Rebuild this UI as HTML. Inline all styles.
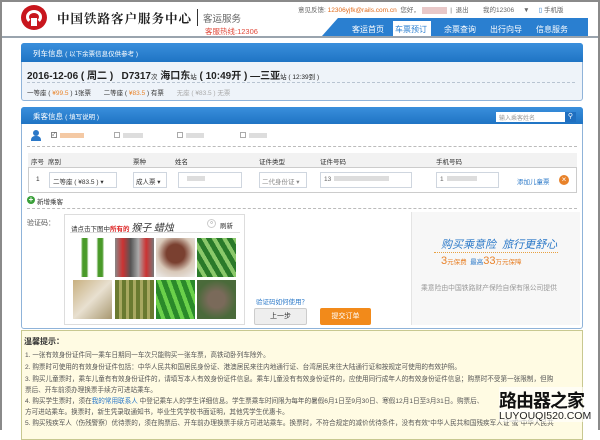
<!DOCTYPE html>
<html><head><meta charset="utf-8"><style>
*{margin:0;padding:0;box-sizing:border-box}
body{width:600px;height:430px;overflow:hidden;background:#fff;font-family:"Liberation Sans","Noto Sans CJK SC",sans-serif;font-size:8px;color:#333;position:relative}
.a{position:absolute;white-space:nowrap}
.frame{position:absolute;left:0;top:0;width:600px;height:430px;border:2px solid #8a8a8a;border-bottom:none;pointer-events:none}
.ph{background:linear-gradient(#3a8fdc,#1f74c4);color:#fff;height:19px;border-radius:3px 3px 0 0}
.in{position:absolute;border:1px solid #cfd6df;background:#fff;height:16px;top:172px;font-size:6.5px;color:#666;padding:3px 3px;white-space:nowrap;overflow:hidden}
.img{position:absolute;width:39px;height:39px}
.tip{position:absolute;left:25px;font-size:6.6px;color:#555;white-space:nowrap}
</style></head><body>
<div class="a" style="left:0;top:0;width:600px;height:38px;background:#fff;border-bottom:2px solid #9aa4ae"></div>
<div class="a" style="left:21px;top:5px;width:26px;height:25px;border-radius:50%;background:#c8161d"></div>
<div class="a" style="left:26px;top:10px;width:16px;height:14px;border-radius:50%;border:3px solid #fff;border-bottom-color:transparent"></div>
<div class="a" style="left:31px;top:18px;width:6px;height:8px;background:#fff"></div>
<div class="a" style="left:57px;top:9px;font-size:12.5px;font-weight:bold;letter-spacing:1px;color:#222;font-family:'Noto Serif CJK SC',serif">中国铁路客户服务中心</div>
<div class="a" style="left:197px;top:9px;width:1px;height:17px;background:#333"></div>
<div class="a" style="left:203px;top:11px;font-size:9.5px;color:#666">客运服务</div>
<div class="a" style="left:205px;top:26px;font-size:7.5px;color:#e0493a">客服热线:12306</div>
<div class="a" style="left:298px;top:4px;font-size:6.5px;color:#666">意见反馈: <span style="color:#e06a1a">12306yjfk@rails.com.cn</span> &nbsp;您好， <span style="display:inline-block;width:25px;height:7px;background:#e8c8c8;vertical-align:middle"></span> &nbsp;| &nbsp;退出 &nbsp; &nbsp; &nbsp; &nbsp;我的12306 &nbsp; &nbsp; ▼ &nbsp; &nbsp; <span style="color:#2a78c8">▯</span> 手机版</div>
<div class="a" style="left:322px;top:18px;width:266px;height:18px;background:#2a7fd0;clip-path:polygon(6% 0,100% 0,100% 100%,0 100%)"></div>
<div class="a" style="left:393px;top:21px;width:38px;height:15px;background:#fff"></div>
<div class="a" style="left:352px;top:24px;font-size:8px;color:#fff">客运首页</div>
<div class="a" style="left:395px;top:24px;font-size:8px;color:#2a7fd0">车票预订</div>
<div class="a" style="left:444px;top:24px;font-size:8px;color:#fff">余票查询</div>
<div class="a" style="left:490px;top:24px;font-size:8px;color:#fff">出行向导</div>
<div class="a" style="left:536px;top:24px;font-size:8px;color:#fff">信息服务</div>

<div class="a" style="left:21px;top:43px;width:562px;height:58px;border:1px solid #8fb3d9;background:#eef3f9;border-radius:3px"></div>
<div class="a ph" style="left:21px;top:43px;width:562px"></div>
<div class="a" style="left:33px;top:48px;font-size:7.5px;color:#fff">列车信息 <span style="font-size:6.5px">( 以下余票信息仅供参考 )</span></div>
<div class="a" style="left:27px;top:67px;font-size:10px;font-weight:bold;color:#222">2016-12-06 ( 周二 ) &nbsp; D7317<span style="font-size:6.5px;font-weight:normal">次</span> 海口东<span style="font-size:6.5px;font-weight:normal">站</span> ( 10:49开 ) —三亚<span style="font-size:6.5px;font-weight:normal">站 ( 12:39到 )</span></div>
<div class="a" style="left:27px;top:82px;width:548px;border-top:1px dashed #b8c4d2"></div>
<div class="a" style="left:27px;top:87px;font-size:6.5px;color:#333">一等座 ( <span style="color:#e9842a">¥99.5</span> ) 1张票 &nbsp; &nbsp; &nbsp; 二等座 ( <span style="color:#e9842a">¥83.5</span> ) 有票 &nbsp; &nbsp; &nbsp; <span style="color:#aaa">无座 ( ¥83.5 ) 无票</span></div>

<div class="a" style="left:21px;top:107px;width:562px;height:222px;border:1px solid #8fb3d9;background:#fff;border-radius:3px"></div>
<div class="a ph" style="left:21px;top:107px;width:562px;height:17px"></div>
<div class="a" style="left:33px;top:111px;font-size:7.5px;color:#fff">乘客信息 <span style="font-size:6.5px">( 填写说明 )</span></div>
<div class="a" style="left:496px;top:112px;width:69px;height:10px;background:#fff;font-size:6px;color:#999;padding:1px 3px">输入乘客姓名</div>
<div class="a" style="left:565px;top:112px;width:11px;height:10px;background:#1f6fc0;color:#fff;font-size:7px;text-align:center;line-height:10px">⚲</div>
<div class="a" style="left:33px;top:130px;width:6px;height:6px;border-radius:50%;background:#2a78c8"></div>
<div class="a" style="left:31px;top:136px;width:10px;height:5px;border-radius:4px 4px 0 0;background:#2a78c8"></div>
<div class="a" style="left:51px;top:132px;width:6px;height:6px;border:1px solid #888;font-size:5px;line-height:4px">✓</div>
<div class="a" style="left:60px;top:133px;width:24px;height:5px;background:#f4c9a4"></div>
<div class="a" style="left:114px;top:132px;width:6px;height:6px;border:1px solid #aaa"></div>
<div class="a" style="left:123px;top:133px;width:20px;height:5px;background:#ddd"></div>
<div class="a" style="left:177px;top:132px;width:6px;height:6px;border:1px solid #aaa"></div>
<div class="a" style="left:186px;top:133px;width:18px;height:5px;background:#ddd"></div>
<div class="a" style="left:240px;top:132px;width:6px;height:6px;border:1px solid #aaa"></div>
<div class="a" style="left:249px;top:133px;width:18px;height:5px;background:#ddd"></div>
<div class="a" style="left:27px;top:146px;width:550px;border-top:1px dashed #bbb"></div>
<div class="a" style="left:28px;top:153px;width:549px;height:40px;border:1px solid #ccc"></div>
<div class="a" style="left:28px;top:153px;width:549px;height:15px;background:#f2f2f2;border-bottom:1px solid #ccc"></div>
<div class="a" style="left:31px;top:156px;font-size:6.5px">序号</div>
<div class="a" style="left:48px;top:156px;font-size:6.5px">席别</div>
<div class="a" style="left:133px;top:156px;font-size:6.5px">票种</div>
<div class="a" style="left:175px;top:156px;font-size:6.5px">姓名</div>
<div class="a" style="left:259px;top:156px;font-size:6.5px">证件类型</div>
<div class="a" style="left:320px;top:156px;font-size:6.5px">证件号码</div>
<div class="a" style="left:436px;top:156px;font-size:6.5px">手机号码</div>
<div class="a" style="left:36px;top:176px;font-size:6.5px">1</div>
<div class="in" style="left:49px;width:68px;color:#333">二等座 ( ¥83.5 ) ▾</div>
<div class="in" style="left:133px;width:34px;color:#333;padding:3px 2px">成人票 ▾</div>
<div class="in" style="left:178px;width:64px"><span style="display:inline-block;width:18px;height:5px;background:#ddd;margin-left:5px"></span></div>
<div class="in" style="left:259px;width:48px;color:#888;padding:3px 2px">二代身份证 ▾</div>
<div class="in" style="left:320px;width:92px">13<span style="display:inline-block;width:55px;height:5px;background:#ddd;margin-left:3px"></span></div>
<div class="in" style="left:436px;width:63px">1<span style="display:inline-block;width:30px;height:5px;background:#ddd;margin-left:3px"></span></div>
<div class="a" style="left:517px;top:176px;font-size:6.5px;color:#2a78c8">添加儿童票</div>
<div class="a" style="left:559px;top:175px;width:10px;height:10px;border-radius:50%;background:#e8822a;color:#fff;font-size:8px;line-height:10px;text-align:center">×</div>
<div class="a" style="left:27px;top:196px;width:8px;height:8px;border-radius:50%;background:#3aa03a;color:#fff;font-size:8px;line-height:8px;text-align:center;font-weight:bold">+</div>
<div class="a" style="left:37px;top:196px;font-size:6.5px">新增乘客</div>
<div class="a" style="left:27px;top:208px;width:550px;border-top:1px dashed #bbb"></div>
<div class="a" style="left:27px;top:218px;font-size:7px;color:#555">验证码：</div>
<div class="a" style="left:64px;top:214px;width:181px;height:111px;border:1px solid #ddd"></div>
<div class="a" style="left:71px;top:219px;font-size:6.5px">请点击下图中<span style="color:#d22;font-weight:bold">所有的</span> <span style="font-size:10px;font-style:italic;font-family:'Liberation Serif',serif">猴子 蜡烛</span></div>
<div class="a" style="left:207px;top:219px;width:9px;height:9px;border-radius:50%;border:1px solid #ccc;font-size:5px;text-align:center;line-height:7px">○</div>
<div class="a" style="left:220px;top:220px;font-size:6.5px">刷新</div>
<div class="a" style="left:70px;top:232px;width:170px;border-top:1px solid #ddd"></div>
<div class="img" style="left:73px;top:238px;background:linear-gradient(90deg,#fff 20%,#4a9a2a 25%,#4a9a2a 35%,#fff 40%,#fff 60%,#4a9a2a 65%,#4a9a2a 75%,#fff 80%)"></div>
<div class="img" style="left:115px;top:238px;background:linear-gradient(90deg,#888,#c33 20%,#555 40%,#aaa 60%,#c33 80%,#777)"></div>
<div class="img" style="left:156px;top:238px;background:radial-gradient(circle at 50% 40%,#7a4030 30%,#d8c8b8 60%,#eee)"></div>
<div class="img" style="left:197px;top:238px;background:repeating-linear-gradient(60deg,#2a7a2a 0 5px,#8ac86a 5px 9px)"></div>
<div class="img" style="left:73px;top:280px;background:linear-gradient(135deg,#c8b080,#e8e0d0 50%,#a89870)"></div>
<div class="img" style="left:115px;top:280px;background:repeating-linear-gradient(90deg,#6a7a30 0 4px,#a8a860 4px 7px)"></div>
<div class="img" style="left:156px;top:280px;background:repeating-linear-gradient(70deg,#2a8a2a 0 5px,#6ad04a 5px 9px)"></div>
<div class="img" style="left:197px;top:280px;background:radial-gradient(circle at 50% 50%,#7a6a5a 30%,#4a6a3a 70%)"></div>
<div class="a" style="left:256px;top:296px;font-size:6.5px;color:#2a78c8">验证码如何使用？</div>
<div class="a" style="left:254px;top:308px;width:53px;height:17px;background:#eee;border:1px solid #ccc;border-radius:2px;font-size:7px;text-align:center;line-height:15px">上一步</div>
<div class="a" style="left:320px;top:308px;width:51px;height:17px;background:#f28a1a;border-radius:2px;font-size:7px;color:#fff;text-align:center;line-height:17px">提交订单</div>
<div class="a" style="left:411px;top:212px;width:169px;height:113px;background:#f7f7f7;border-left:1px solid #e4e4e4"></div>
<div class="a" style="left:441px;top:236px;font-size:11px;font-style:italic;color:#2a78c8">购买乘意险 &nbsp;旅行更舒心</div>
<div class="a" style="left:434px;top:252px;width:124px;border-top:1px dotted #e8a040"></div>
<div class="a" style="left:441px;top:255px;font-size:6.5px;color:#e8822a"><span style="font-size:11px">3</span>元保费 &nbsp;<span style="color:#2a78c8">最高</span><span style="font-size:11px">33</span>万元保障</div>
<div class="a" style="left:421px;top:282px;font-size:6.8px;color:#999">乘意险由中国铁路财产保险自保有限公司提供</div>

<div class="a" style="left:21px;top:330px;width:562px;height:110px;background:#fffbe3;border:1px solid #c8c890"></div>
<div class="a" style="left:24px;top:336px;font-size:8px;font-weight:bold;color:#333">温馨提示：</div>
<div class="tip" style="top:349px">1. 一张有效身份证件同一乘车日期同一车次只能购买一张车票，高铁动卧列车除外。</div>
<div class="tip" style="top:361px">2. 购票时可使用的有效身份证件包括：中华人民共和国居民身份证、港澳居民来往内地通行证、台湾居民来往大陆通行证和按规定可使用的有效护照。</div>
<div class="tip" style="top:373px">3. 购买儿童票时，乘车儿童有有效身份证件的，请填写本人有效身份证件信息。乘车儿童没有有效身份证件的，应使用同行成年人的有效身份证件信息；购票时不受第一张限制，但购</div>
<div class="tip" style="top:384px">票后、开车前须办理换票手续方可进站乘车。</div>
<div class="tip" style="top:395px">4. 购买学生票时，须在<span style="color:#2a78c8">我的常用联系人</span> 中登记乘车人的学生详细信息。学生票乘车时间限为每年的暑假6月1日至9月30日、寒假12月1日至3月31日。购票后、</div>
<div class="tip" style="top:406px">方可进站乘车。换票时，新生凭录取通知书，毕业生凭学校书面证明，其他凭学生优惠卡。</div>
<div class="tip" style="top:417px">5. 购买残疾军人（伤残警察）优待票的，须在购票后、开车前办理换票手续方可进站乘车。换票时，不符合规定的减价优待条件，没有有效"中华人民共和国残疾军人证"或"中华人民共</div>
<div class="a" style="left:499px;top:387px;font-size:18px;font-weight:bold;color:#111;background:rgba(255,255,255,.6);letter-spacing:-1px">路由器之家</div>
<div class="a" style="left:499px;top:410px;font-size:10.5px;color:#222;background:rgba(255,255,255,.6)">LUYOUQI520.COM</div>
<div class="frame"></div>
</body></html>
